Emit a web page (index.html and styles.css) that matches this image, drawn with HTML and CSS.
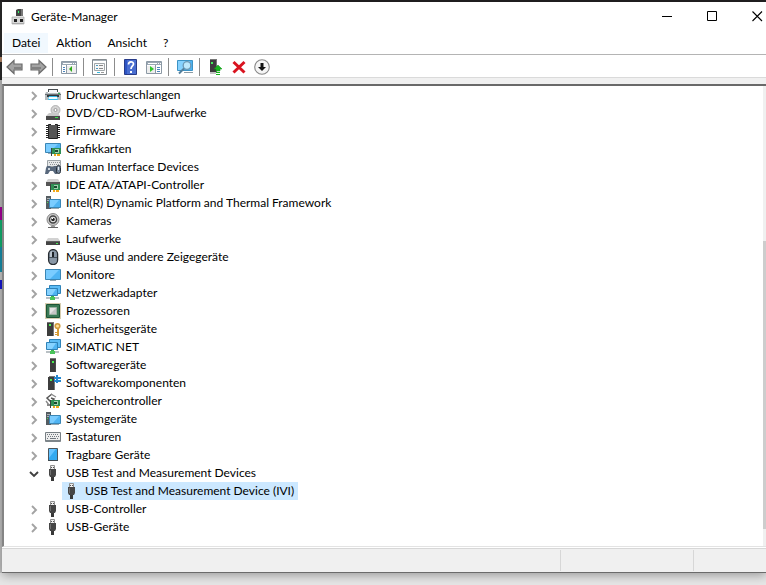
FILE: index.html
```
<!DOCTYPE html>
<html lang="de">
<head>
    <meta charset="UTF-8">
    <meta name="viewport" content="width=device-width, initial-scale=1.0">
    <title>Geräte-Manager</title>
    <link rel="stylesheet" href="styles.css">
</head>
<body>
    <!-- icon set -->
    <svg class="icon-set" aria-hidden="true">
        <symbol id="i-manager" viewBox="0 0 16 16"><path fill="#444" d="M6 1l2-1h5v7H6z"/><path fill="#777" d="M11 0h2v7h-2z"/><path fill="#3f6" d="M8 2h1v2H8z"/><path fill="#d9d9d9" stroke="#999" stroke-width=".6" d="M2 8h12v7H2z"/><path fill="#222" d="M4 10h3v3H4zM10 10h3v3h-3z"/><path fill="#aaa" d="M2 14h12v1H2z"/></symbol>
        <symbol id="i-chevron" viewBox="0 0 8 10"><path fill="none" stroke="#a3a3a3" stroke-width="1.9" d="M2 1l4 4-4 4"/></symbol>
        <symbol id="i-chevron-open" viewBox="0 0 10 8"><path fill="none" stroke="#404040" stroke-width="1.9" d="M1 2l4 4 4-4"/></symbol>
        <symbol id="i-printer" viewBox="0 0 16 16"><path fill="#4a4f52" d="M3 2h10v3H3z"/><path fill="#f4f6f7" d="M4 3h8v3H4z"/><path fill="#b4babd" d="M1 5h2v1h10V5h2l1 2v6h-3v-2H3v2H0V7z"/><path fill="#6b7276" d="M0 7h16v1H0z"/><path fill="#2f3438" d="M2 8h12v2H2z"/><path fill="#35b9e8" d="M4 9h8l1 4H3z"/><path fill="#f2fafd" d="M4 10h8v2H4z"/><path fill="#2eaf4f" d="M13 6h2v1h-2z"/></symbol>
        <symbol id="i-dvd" viewBox="0 0 16 16"><circle cx="10.500" cy="5" r="4.500" fill="#d5d5d5" stroke="#9b9b9b" stroke-width=".7"/><circle cx="10.500" cy="5" r="1.500" fill="#fff" stroke="#888" stroke-width=".8"/><path fill="#c9c9c9" d="M4 8h9l2 3H1z"/><path fill="#4a4a4a" d="M1 11h14v4H1z"/><path fill="#38e04c" d="M10 12h3v1h-3z"/></symbol>
        <symbol id="i-firmware" viewBox="0 0 16 16"><path stroke="#222" d="M1 2.500h14M1 4.500h14M1 6.500h14M1 8.500h14M1 10.500h14M1 12.500h14M1 14.500h14"/><path fill="#555" stroke="#222" d="M3.500 1.500h9v14h-9z"/><path fill="#fff" d="M6 1h4v1H6z"/></symbol>
        <symbol id="i-card" viewBox="0 0 10 8"><path fill="#2f8f54" d="M1 0h9v6H1z"/><path fill="#9fd0ae" d="M4 1h4v1H4zM4 4h4v1H4zM7 2h1v2H7z"/><path fill="#1c4a2f" d="M4 2h3v2H4z"/><path fill="#39423d" d="M0 0h1v8H0z"/><path fill="#f2a91b" d="M3 6h2v2H3zM6 6h3v2H6z"/></symbol>
        <symbol id="i-display" viewBox="0 0 16 16"><path fill="#4fb4f3" stroke="#3a86b5" d="M.5 2.500h15v10H.5z"/><path fill="#7accff" d="M1 3h13L5 12H1z"/><path fill="#9aa9b2" d="M5 13h6v1H5z"/></symbol>
        <symbol id="i-graphics" viewBox="0 0 16 16"><path fill="#4fb4f3" stroke="#3a86b5" d="M.5 2.500h15v9H.5z"/><path fill="#7accff" d="M1 3h12L5 11H1z"/><path fill="#9aa9b2" d="M3 12h3v1H3z"/><use href="#i-card" x="6" y="7" width="10" height="8"/></symbol>
        <symbol id="i-hid" viewBox="0 0 16 16"><path fill="#e6e8e9" stroke="#9da4a8" d="M2.500 1.500h13v6h-13z"/><path stroke="#8d9498" stroke-dasharray="1 1" d="M4 3.500h11M5 5.500h10"/><path fill="#58687c" d="M2 7h3l1 1h2l1-1h2l1 3v5h-2l-2-3H5l-2 3H0l1-6z"/><path fill="#c9d2db" d="M3 9h2v2H3z"/><rect x="11.500" y="6.500" width="4" height="8" rx="2" fill="#798a9d" stroke="#28313b"/><path fill="#e1e8ee" d="M13 8h1v3h-1z"/></symbol>
        <symbol id="i-ide" viewBox="0 0 16 16"><path fill="#cfcfcf" d="M3 2h10l2 3H1z"/><path fill="#555" d="M1 5h14v4H1z"/><use href="#i-card" x="5" y="7" width="10" height="8"/></symbol>
        <symbol id="i-computer" viewBox="0 0 16 16"><path fill="#555d62" d="M1 1h5v13H1z"/><path fill="#a8afb3" d="M2 3h3v1H2zM2 5h3v1H2z"/><path fill="#46d953" d="M2 7h1v1H2z"/><path fill="#4fb4f3" stroke="#3a86b5" d="M4.500 4.500h11v8h-11z"/><path fill="#7accff" d="M5 5h9l-6 7H5z"/><path fill="#9aa9b2" d="M6 13h8v1H6z"/></symbol>
        <symbol id="i-camera" viewBox="0 0 16 16"><circle cx="8" cy="6.500" r="6" fill="#c9c9c9" stroke="#888"/><circle cx="8" cy="6.500" r="3.500" fill="#eee" stroke="#444" stroke-width="1.500"/><circle cx="8" cy="6.500" r="1.800" fill="#252525"/><path fill="#fff" d="M7 5h1v1H7z"/><path fill="#999" d="M6 13h4v1H6z"/><path fill="#666" d="M3 14h10v1H3z"/></symbol>
        <symbol id="i-drive" viewBox="0 0 16 16"><path fill="#d2d2d2" d="M3 7h10l2 3H1z"/><path fill="#444" d="M1 10h14v4H1z"/><path fill="#606060" d="M1 10h14v1H1z"/><path fill="#4be958" d="M11 12h2v1h-2z"/></symbol>
        <symbol id="i-mouse" viewBox="0 0 16 16"><rect x="3.600" y=".6" width="9" height="15" rx="4.500" fill="#8997a6" stroke="#272c31" stroke-width="1.300"/><path fill="#bac4ce" d="M5 4c0-1 1-2 2-2v6H5z"/><path stroke="#45505b" d="M4 8.500h8"/><rect x="7" y="3" width="2" height="5" fill="#1d2227"/></symbol>
        <symbol id="i-network" viewBox="0 0 16 16"><path fill="#5cbcf5" stroke="#2f83b8" d="M4.500 .5h11v8h-11z"/><path fill="#4fb4f3" stroke="#2f83b8" d="M1.500 3.500h11v7h-11z"/><path fill="#86d2ff" d="M2 4h9l-4 6H2z"/><path fill="#3bb44d" d="M6 11h3v1H6z"/><path fill="#b9c0c4" d="M1 12h4v2H1zM10 12h4v2h-4z"/><path fill="#4ac45b" d="M5 12h5v3H5z"/></symbol>
        <symbol id="i-cpu" viewBox="0 0 16 16"><path fill="none" stroke="#ac9b60" stroke-dasharray="1 1" d="M.5 .5h15v15H.5z"/><path fill="#3a7a55" stroke="#1d5435" d="M1.500 1.500h13v13h-13z"/><path fill="#e4e4e4" stroke="#9ab1a2" d="M4.500 4.500h7v7h-7z"/><path fill="#c5c5c5" d="M11 5v6H5z"/></symbol>
        <symbol id="i-tower" viewBox="0 0 16 16"><path fill="#777" d="M5 1h6v14H5z"/><path fill="#3d3d3d" d="M5 2h5v13H5z"/><path fill="#4b4b4b" d="M10 2h1v13h-1z"/><path fill="#49ee4f" d="M7 4h2v2H7z"/></symbol>
        <symbol id="i-security" viewBox="0 0 16 16"><path fill="#777" d="M2 1h7v14H2z"/><path fill="#3d3d3d" d="M2 2h6v13H2z"/><path fill="#49ee4f" d="M4 3h2v2H4z"/><circle cx="12.500" cy="5" r="2.300" fill="#ffe19a" stroke="#d09a3c" stroke-width="1.600"/><path fill="#d79c35" d="M12 8h2v7h-2zM10 11h2v1h-2zM10 13h2v1h-2z"/></symbol>
        <symbol id="i-component" viewBox="0 0 16 16"><path fill="#777" d="M4 1h6v14H4z"/><path fill="#3d3d3d" d="M3 2h6v13H3z"/><path fill="#49ee4f" d="M5 4h2v2H5z"/><path fill="#2688cf" d="M9 2h2V0h2v2h3v2h-3v1h3v2h-3v1h-2V7H9V5h2V4H9z"/></symbol>
        <symbol id="i-storage" viewBox="0 0 16 16"><path fill="none" stroke="#555" stroke-width="1.500" d="M7 1L2 5l4 4 3-3-3-1"/><path fill="none" stroke="#888" stroke-width="1.300" d="M6 1l5 3M1 8l3 4h3"/><path fill="#888" d="M2 11h4v2H2z"/><use href="#i-card" x="5" y="7" width="10" height="8"/></symbol>
        <symbol id="i-keyboard" viewBox="0 0 16 16"><path fill="#eee" stroke="#777f84" d="M.5 3.500h15v9H.5z"/><path fill="#7d858a" d="M1 11h14v2H1z"/><path stroke="#727980" stroke-dasharray="1 1" d="M2 5.500h12M3 7.500h11M2 9.500h2M12 9.500h2"/><path stroke="#727980" d="M5 9.500h6"/></symbol>
        <symbol id="i-tablet" viewBox="0 0 16 16"><path fill="#33a9ef" stroke="#4c565c" d="M3.500 1.500h9v12h-9z"/><path fill="#65c3ff" d="M4 2h7L4 11z"/><path fill="#3f4a51" d="M3 13h10v1H3z"/></symbol>
        <symbol id="i-usb" viewBox="0 0 16 16"><path fill="#eee" stroke="#909090" d="M5.500 .5h4v4h-4z"/><path fill="#555" d="M6 2h1v1H6zM8 2h1v1H8z"/><path fill="#454545" d="M4 4h7v6l-1 2H5l-1-2z"/><path fill="#707070" d="M5 5h1v5H5z"/><path fill="#383838" d="M6 12h3v4H6z"/></symbol>
        <symbol id="i-back" viewBox="0 0 18 16"><path fill="#a3a3a3" stroke="#6c6c6c" stroke-width="1.200" d="M1 8l7-6.500V5h8v6H8v3.500z"/><path fill="#808080" d="M8 8h7v2H8z"/></symbol>
        <symbol id="i-forward" viewBox="0 0 18 16"><path fill="#a3a3a3" stroke="#6c6c6c" stroke-width="1.200" d="M17 8l-7-6.500V5H2v6h8v3.500z"/><path fill="#808080" d="M3 8h9v2H3z"/></symbol>
        <symbol id="i-console" viewBox="0 0 16 16"><path fill="#fff" stroke="#8c99a5" d="M.5 2.500h15v12H.5z"/><path fill="#9aa7b3" d="M1 3h14v3H1z"/><path fill="#fff" d="M2 4h9v1H2zM12 4h1v1h-1zM14 4h1v1h-1z"/><path stroke="#8c99a5" d="M5.500 6v8"/><path stroke="#4b84bc" d="M2 8.500h2M2 10.500h2M2 12.500h2"/><path fill="#eee" d="M6 7h9v7H6z"/><path fill="#31a91d" d="M11 7v6l-3-3z"/></symbol>
        <symbol id="i-action" viewBox="0 0 16 16"><path fill="#fff" stroke="#8c99a5" d="M.5 2.500h15v12H.5z"/><path fill="#9aa7b3" d="M1 3h14v3H1z"/><path fill="#fff" d="M2 4h9v1H2zM12 4h1v1h-1zM14 4h1v1h-1z"/><path fill="#eee" d="M1 7h8v7H1z"/><path stroke="#8c99a5" d="M9.500 6v8"/><path stroke="#4b84bc" d="M11 8.500h3M11 10.500h3M11 12.500h3"/><path fill="#31c52d" d="M4 7v6l4-3z"/></symbol>
        <symbol id="i-props" viewBox="0 0 16 16"><path fill="#fff" stroke="#858b90" d="M.5 .5h14v15H.5z"/><path fill="#a8b1b8" d="M1 1h13v1H1z"/><path fill="#f7f7f7" stroke="#a1a7aa" d="M2.500 4.500h10v7h-10z"/><path stroke="#4e99be" d="M4 6.500h2M4 9.500h2"/><path stroke="#888" d="M7 6.500h4M7 9.500h4"/><path fill="#32b9de" d="M5 13h3v1H5z"/><path fill="#999" d="M9 13h3v1H9z"/></symbol>
        <symbol id="i-help" viewBox="0 0 16 16"><path fill="#2d55c5" stroke="#283b88" d="M1.500 .5h12v15h-12z"/><path fill="#6687dc" d="M4 1h9v14H4z" opacity=".5"/><path fill="none" stroke="#fff" stroke-width="1.700" d="M5.500 5.500c0-3.500 5-3.500 5-.5 0 2-2.500 2-2.500 5"/><path fill="#fff" d="M7 12h2v2H7z"/></symbol>
        <symbol id="i-scan" viewBox="0 0 16 16"><path fill="#4fb4f3" stroke="#3c93c5" d="M.5 1.500h15v10H.5z"/><path fill="#86d2ff" d="M1 2h12L5 11H1z"/><path fill="#8b9aa3" d="M7 13h9v1H7z"/><circle cx="10" cy="6.500" r="3.800" fill="#bce8fd" stroke="#6d99b5" stroke-width="1.300"/><path stroke="#547f9c" stroke-width="2" d="M7 9.500L2 14.500"/></symbol>
        <symbol id="i-update" viewBox="0 0 16 16"><path fill="#777" d="M2 0h7v14H2z"/><path fill="#3d3d3d" d="M2 1h6v13H2z"/><path fill="#c4c4c4" d="M2 13h6v2H2z"/><path fill="#42f05b" d="M3 3h2v2H3z"/><path fill="#18b51e" stroke="#0b9412" stroke-width=".5" d="M10 6l4 4h-2v2H8v-2H6z"/><path fill="#18b51e" d="M8 13h4v1H8zM8 15h4v1H8z"/></symbol>
        <symbol id="i-remove" viewBox="0 0 16 16"><path stroke="#d91420" stroke-width="3" d="M2.500 3l11 10.500M13.500 3l-11 10.500"/></symbol>
        <symbol id="i-disable" viewBox="0 0 16 16"><circle cx="8" cy="8" r="7.300" fill="#f5f5f5" stroke="#888" stroke-width="1.100"/><path fill="#111" d="M6.500 4h3v4H12l-4 4-4-4h2.500z"/></symbol>
        <symbol id="i-min" viewBox="0 0 11 11"><path stroke="#000" d="M0 5.500h10"/></symbol>
        <symbol id="i-max" viewBox="0 0 11 11"><path fill="none" stroke="#000" d="M.5 .5h9v9h-9z"/></symbol>
        <symbol id="i-close" viewBox="0 0 11 11"><path stroke="#000" stroke-width="1.100" d="M.5 .5l9.500 9.500M10 .5L.5 10"/></symbol>
    </svg>

    <div class="desktop">
        <div class="backdrop"></div>
        <main class="window">
            <header class="titlebar">
                <svg class="icon"><use href="#i-manager"/></svg>
                <h1>Geräte-Manager</h1>
                <div class="window-buttons">
                    <button aria-label="Minimieren"><svg><use href="#i-min"/></svg></button>
                    <button aria-label="Maximieren"><svg><use href="#i-max"/></svg></button>
                    <button aria-label="Schließen"><svg><use href="#i-close"/></svg></button>
                </div>
            </header>
            <nav class="menubar">
                <button class="active">Datei</button>
                <button>Aktion</button>
                <button>Ansicht</button>
                <button>?</button>
            </nav>
            <div class="toolbar">
                <div class="group first">
                    <button aria-label="Zurück"><svg class="wide"><use href="#i-back"/></svg></button>
                    <button aria-label="Vorwärts"><svg class="wide"><use href="#i-forward"/></svg></button>
                </div>
                <div class="group"><button aria-label="Konsolenstruktur"><svg class="icon"><use href="#i-console"/></svg></button></div>
                <div class="group"><button aria-label="Eigenschaften"><svg class="icon"><use href="#i-props"/></svg></button></div>
                <div class="group">
                    <button aria-label="Hilfe"><svg class="icon"><use href="#i-help"/></svg></button>
                    <button aria-label="Aktionsbereich"><svg class="icon"><use href="#i-action"/></svg></button>
                </div>
                <div class="group"><button aria-label="Nach Hardware suchen"><svg class="icon"><use href="#i-scan"/></svg></button></div>
                <div class="group">
                    <button aria-label="Treiber aktualisieren"><svg class="icon"><use href="#i-update"/></svg></button>
                    <button aria-label="Deinstallieren"><svg class="icon"><use href="#i-remove"/></svg></button>
                    <button aria-label="Deaktivieren"><svg class="icon"><use href="#i-disable"/></svg></button>
                </div>
            </div>

            <div class="content">
                <ul class="tree">
                    <li><button class="toggle" aria-label="Erweitern"><svg><use href="#i-chevron"/></svg></button><svg class="icon"><use href="#i-printer"/></svg><span>Druckwarteschlangen</span></li>
                    <li><button class="toggle" aria-label="Erweitern"><svg><use href="#i-chevron"/></svg></button><svg class="icon"><use href="#i-dvd"/></svg><span>DVD/CD-ROM-Laufwerke</span></li>
                    <li><button class="toggle" aria-label="Erweitern"><svg><use href="#i-chevron"/></svg></button><svg class="icon"><use href="#i-firmware"/></svg><span>Firmware</span></li>
                    <li><button class="toggle" aria-label="Erweitern"><svg><use href="#i-chevron"/></svg></button><svg class="icon"><use href="#i-graphics"/></svg><span>Grafikkarten</span></li>
                    <li><button class="toggle" aria-label="Erweitern"><svg><use href="#i-chevron"/></svg></button><svg class="icon"><use href="#i-hid"/></svg><span>Human Interface Devices</span></li>
                    <li><button class="toggle" aria-label="Erweitern"><svg><use href="#i-chevron"/></svg></button><svg class="icon"><use href="#i-ide"/></svg><span>IDE ATA/ATAPI-Controller</span></li>
                    <li><button class="toggle" aria-label="Erweitern"><svg><use href="#i-chevron"/></svg></button><svg class="icon"><use href="#i-computer"/></svg><span>Intel(R) Dynamic Platform and Thermal Framework</span></li>
                    <li><button class="toggle" aria-label="Erweitern"><svg><use href="#i-chevron"/></svg></button><svg class="icon"><use href="#i-camera"/></svg><span>Kameras</span></li>
                    <li><button class="toggle" aria-label="Erweitern"><svg><use href="#i-chevron"/></svg></button><svg class="icon"><use href="#i-drive"/></svg><span>Laufwerke</span></li>
                    <li><button class="toggle" aria-label="Erweitern"><svg><use href="#i-chevron"/></svg></button><svg class="icon"><use href="#i-mouse"/></svg><span>Mäuse und andere Zeigegeräte</span></li>
                    <li><button class="toggle" aria-label="Erweitern"><svg><use href="#i-chevron"/></svg></button><svg class="icon"><use href="#i-display"/></svg><span>Monitore</span></li>
                    <li><button class="toggle" aria-label="Erweitern"><svg><use href="#i-chevron"/></svg></button><svg class="icon"><use href="#i-network"/></svg><span>Netzwerkadapter</span></li>
                    <li><button class="toggle" aria-label="Erweitern"><svg><use href="#i-chevron"/></svg></button><svg class="icon"><use href="#i-cpu"/></svg><span>Prozessoren</span></li>
                    <li><button class="toggle" aria-label="Erweitern"><svg><use href="#i-chevron"/></svg></button><svg class="icon"><use href="#i-security"/></svg><span>Sicherheitsgeräte</span></li>
                    <li><button class="toggle" aria-label="Erweitern"><svg><use href="#i-chevron"/></svg></button><svg class="icon"><use href="#i-network"/></svg><span>SIMATIC NET</span></li>
                    <li><button class="toggle" aria-label="Erweitern"><svg><use href="#i-chevron"/></svg></button><svg class="icon"><use href="#i-tower"/></svg><span>Softwaregeräte</span></li>
                    <li><button class="toggle" aria-label="Erweitern"><svg><use href="#i-chevron"/></svg></button><svg class="icon"><use href="#i-component"/></svg><span>Softwarekomponenten</span></li>
                    <li><button class="toggle" aria-label="Erweitern"><svg><use href="#i-chevron"/></svg></button><svg class="icon"><use href="#i-storage"/></svg><span>Speichercontroller</span></li>
                    <li><button class="toggle" aria-label="Erweitern"><svg><use href="#i-chevron"/></svg></button><svg class="icon"><use href="#i-computer"/></svg><span>Systemgeräte</span></li>
                    <li><button class="toggle" aria-label="Erweitern"><svg><use href="#i-chevron"/></svg></button><svg class="icon"><use href="#i-keyboard"/></svg><span>Tastaturen</span></li>
                    <li><button class="toggle" aria-label="Erweitern"><svg><use href="#i-chevron"/></svg></button><svg class="icon"><use href="#i-tablet"/></svg><span>Tragbare Geräte</span></li>
                    <li><button class="toggle open" aria-label="Reduzieren"><svg><use href="#i-chevron-open"/></svg></button><svg class="icon"><use href="#i-usb"/></svg><span>USB Test and Measurement Devices</span></li>
                    <li class="child"><div class="selected"><svg class="icon"><use href="#i-usb"/></svg><span>USB Test and Measurement Device (IVI)</span></div></li>
                    <li><button class="toggle" aria-label="Erweitern"><svg><use href="#i-chevron"/></svg></button><svg class="icon"><use href="#i-usb"/></svg><span>USB-Controller</span></li>
                    <li><button class="toggle" aria-label="Erweitern"><svg><use href="#i-chevron"/></svg></button><svg class="icon"><use href="#i-usb"/></svg><span>USB-Geräte</span></li>
                </ul>
                <div class="scrollbar"><div class="thumb"></div></div>
            </div>
            <footer class="statusbar">
                <div class="cell main"></div>
                <div class="cell"></div>
                <div class="cell last"></div>
            </footer>
        </main>
    </div>
</body>
</html>
```
FILE: styles.css
```
* {
    box-sizing: border-box;
}

body {
    margin: 0;
    background-color: #e6e6e6;
    color: #000;
    font-family: Lato, "Open Sans", sans-serif;
    font-size: 12px;
    line-height: 18px;
    overflow: hidden;
}

button {
    border: none;
    padding: 0;
    background: none;
    color: inherit;
    font: inherit;
}

svg {
    display: block;
    flex: none;
}

.icon-set {
    position: absolute;
    width: 0;
    height: 0;
}

.icon {
    width: 16px;
    height: 16px;
}

.wide {
    width: 18px;
    height: 16px;
}

.desktop {
    display: flex;
    height: 100vh;
    padding-bottom: 12px;
    border-top: 2px solid #232122;
}

/* the strip of desktop left of the window */
.backdrop {
    flex: none;
    width: 2px;
    background: linear-gradient(#2b2b2b 0 55px, #b98a6a 55px 60px, #2b2b2b 60px 78px, #bdbdbd 78px 205px, #a8009b 205px 218px, #12b573 218px 245px, #1893b0 245px 270px, #ccc 270px 278px, #1717d8 278px 287px, #c4c4c4 287px);
}

.window {
    display: flex;
    flex: 1;
    flex-direction: column;
    min-width: 0;
    background-color: #fff;
    border-bottom: 1px solid #6b6b6b;
    box-shadow: 0 2px 10px rgba(0, 0, 0, 0.35);
}

.titlebar {
    display: flex;
    flex: none;
    align-items: center;
    height: 30px;
    padding-left: 8px;
}

.titlebar h1 {
    flex: 1;
    margin: 0 0 0 5px;
    font-size: 12px;
    font-weight: normal;
}

.window-buttons {
    display: flex;
    align-self: flex-start;
    margin-right: -14px;
}

.window-buttons button {
    display: flex;
    align-items: center;
    justify-content: center;
    width: 45px;
    height: 29px;
}

.window-buttons svg {
    width: 11px;
    height: 11px;
}

.menubar {
    display: flex;
    flex: none;
    height: 23px;
    padding: 1px 2px;
    border-bottom: 1px solid #b4b4b4;
}

.menubar button {
    padding: 0 8px;
}

.menubar .active {
    background-color: #f1f8fe;
}

.toolbar {
    display: flex;
    flex: none;
    align-items: flex-start;
    height: 23px;
    padding: 3px 0 0 4px;
    border-bottom: 1px solid #dadada;
}

.group {
    display: flex;
    gap: 7px;
    padding: 1px 6px 1px 8px;
    border-right: 1px solid #8c8c8c;
}

.group.first {
    gap: 5px;
    padding: 1px 5px 1px 0;
}

.group:last-child {
    border-right: none;
}

.content {
    display: flex;
    flex: 1;
    min-height: 0;
    margin-top: 6px;
    border-top: 2px solid #696969;
    border-left: 2px solid #858585;
    border-bottom: 1px solid #e3e3e3;
    box-shadow: 0 -6px #f0f0f0;
}

.tree {
    flex: 1;
    margin: 0;
    padding: 0;
    list-style: none;
}

.tree li {
    display: flex;
    align-items: center;
    height: 18px;
    padding-left: 25px;
}

.tree span {
    margin-left: 5px;
    white-space: nowrap;
}

.toggle {
    width: 16px;
    padding: 2px 0 0 1px;
}

.toggle svg {
    width: 8px;
    height: 10px;
}

.toggle.open {
    padding: 2px 0 0;
}

.toggle.open svg {
    width: 10px;
    height: 8px;
}

.tree .child {
    padding-left: 58px;
}

.selected {
    display: flex;
    align-items: center;
    padding: 0 4px 0 2px;
    background-color: #cce8ff;
}

.scrollbar {
    width: 3px;
    padding-top: 155px;
    background-color: #f0f0f0;
}

.thumb {
    height: 288px;
    background-color: #cdcdcd;
}

.statusbar {
    display: flex;
    flex: none;
    height: 24px;
    margin-top: 1px;
    padding: 1px 0;
    border-top: 1px solid #d7d7d7;
    background-color: #f0f0f0;
}

.cell {
    width: 133px;
    border-right: 1px solid #d7d7d7;
}

.cell.main {
    flex: 1;
}

.cell.last {
    width: 72px;
    border-right: none;
}
```
